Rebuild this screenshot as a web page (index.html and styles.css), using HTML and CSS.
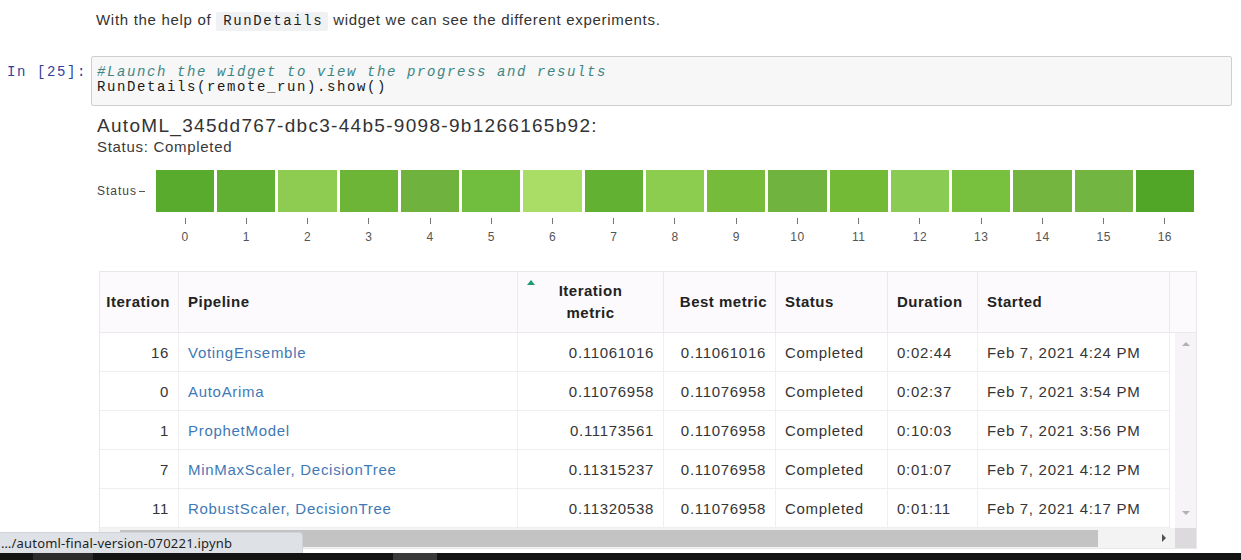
FILE: index.html
```html
<!DOCTYPE html>
<html lang="en">
<head>
<meta charset="utf-8">
<title>automl-final-version-070221</title>
<link rel="stylesheet" href="styles.css">
</head>
<body>
<div class="md">With the help of <code class="ic">RunDetails</code> widget we can see the different experiments.</div>

<div class="cell">
  <div class="prompt">In [25]:</div>
  <div class="input">
    <div class="line cm">#Launch the widget to view the progress and results</div>
    <div class="line">RunDetails(remote_run).show()</div>
  </div>
</div>

<div class="output">
  <div class="title">AutoML_345dd767-dbc3-44b5-9098-9b1266165b92:</div>
  <div class="status">Status: Completed</div>

  <div class="chart">
    <div class="ylabel">Status</div>
    <div class="bars">
      <div class="bar" style="background:#59ab2e"></div>
      <div class="bar" style="background:#62b033"></div>
      <div class="bar" style="background:#8dcb51"></div>
      <div class="bar" style="background:#6cb537"></div>
      <div class="bar" style="background:#6fb23d"></div>
      <div class="bar" style="background:#71bd3e"></div>
      <div class="bar" style="background:#a9dd66"></div>
      <div class="bar" style="background:#62b132"></div>
      <div class="bar" style="background:#8ccd50"></div>
      <div class="bar" style="background:#76bb3a"></div>
      <div class="bar" style="background:#70b43f"></div>
      <div class="bar" style="background:#73bb37"></div>
      <div class="bar" style="background:#8acb53"></div>
      <div class="bar" style="background:#77c13f"></div>
      <div class="bar" style="background:#73b53f"></div>
      <div class="bar" style="background:#72b540"></div>
      <div class="bar" style="background:#51a527"></div>
    </div>
  </div>
  <div class="axis">
    <span>0</span><span>1</span><span>2</span><span>3</span><span>4</span><span>5</span><span>6</span><span>7</span><span>8</span><span>9</span><span>10</span><span>11</span><span>12</span><span>13</span><span>14</span><span>15</span><span>16</span>
  </div>

  <div class="grid">
    <div class="hrow">
      <div class="th r">Iteration</div>
      <div class="th">Pipeline</div>
      <div class="th c sorted"><span class="sort"></span>Iteration<br>metric</div>
      <div class="th r">Best metric</div>
      <div class="th">Status</div>
      <div class="th">Duration</div>
      <div class="th">Started</div>
      <div class="th gut"></div>
    </div>
    <div class="gbody">
      <div class="rows">
        <div class="row">
          <div class="td r">16</div><div class="td"><a class="lk">VotingEnsemble</a></div><div class="td r">0.11061016</div><div class="td r">0.11061016</div><div class="td">Completed</div><div class="td">0:02:44</div><div class="td">Feb 7, 2021 4:24 PM</div>
        </div>
        <div class="row">
          <div class="td r">0</div><div class="td"><a class="lk">AutoArima</a></div><div class="td r">0.11076958</div><div class="td r">0.11076958</div><div class="td">Completed</div><div class="td">0:02:37</div><div class="td">Feb 7, 2021 3:54 PM</div>
        </div>
        <div class="row">
          <div class="td r">1</div><div class="td"><a class="lk">ProphetModel</a></div><div class="td r">0.11173561</div><div class="td r">0.11076958</div><div class="td">Completed</div><div class="td">0:10:03</div><div class="td">Feb 7, 2021 3:56 PM</div>
        </div>
        <div class="row">
          <div class="td r">7</div><div class="td"><a class="lk">MinMaxScaler, DecisionTree</a></div><div class="td r">0.11315237</div><div class="td r">0.11076958</div><div class="td">Completed</div><div class="td">0:01:07</div><div class="td">Feb 7, 2021 4:12 PM</div>
        </div>
        <div class="row">
          <div class="td r">11</div><div class="td"><a class="lk">RobustScaler, DecisionTree</a></div><div class="td r">0.11320538</div><div class="td r">0.11076958</div><div class="td">Completed</div><div class="td">0:01:11</div><div class="td">Feb 7, 2021 4:17 PM</div>
        </div>
      </div>
      <div class="vscroll"><span class="arr up"></span><span class="arr down"></span></div>
    </div>
    <div class="hscroll">
      <div class="track"><div class="thumb"></div><span class="arr right"></span></div>
      <div class="corner"></div>
    </div>
  </div>
</div>

<div class="tooltip">…/automl-final-version-070221.ipynb</div>
<div class="taskbar"><span class="tb1"></span><span class="tb2"></span></div>
</body>
</html>
```

FILE: styles.css
```css
* { box-sizing: border-box; }

html, body {
  margin: 0;
  padding: 0;
  background: #ffffff;
  height: 560px;
  overflow: hidden;
}

body {
  font-family: "Liberation Sans", Arial, sans-serif;
  color: #333333;
}

/* markdown cell */
.md {
  padding: 10px 0 0 96px;
  font-size: 15px;
  line-height: 20px;
  letter-spacing: 0.7px;
  color: #333;
}

.ic {
  font-family: "Liberation Mono", "Courier New", monospace;
  font-size: 14px;
  letter-spacing: 1.6px;
  background: #f0f1f3;
  padding: 1px 5px 2px 7px;
  border-radius: 2px;
  color: #222;
}

/* code cell */
.cell {
  display: flex;
  margin-top: 25px;
  padding: 0 9px 0 7px;
}

.prompt {
  width: 84px;
  flex: none;
  font-family: "Liberation Mono", "Courier New", monospace;
  font-size: 14px;
  letter-spacing: 1.6px;
  color: #303f9f;
  padding-top: 9px;
  line-height: 15px;
}

.input {
  flex: 1;
  height: 50px;
  background: #f7f7f7;
  border: 1px solid #cfcfcf;
  border-radius: 2px;
  padding: 8px 5px 0 5px;
  font-family: "Liberation Mono", "Courier New", monospace;
  font-size: 14px;
  letter-spacing: 1.6px;
  line-height: 15px;
  color: #1a1a1a;
}

.line { white-space: pre; }
.cm { color: #3d8585; font-style: italic; }

/* output */
.output {
  margin-left: 97px;
}

.title {
  margin-top: 8px;
  font-size: 19px;
  line-height: 24px;
  letter-spacing: 1.3px;
  color: #333;
}

.status {
  font-size: 15px;
  line-height: 18px;
  letter-spacing: 0.7px;
  color: #3a3a3a;
}

.chart {
  display: flex;
  align-items: center;
  margin-top: 14px;
  height: 42px;
}

.ylabel {
  width: 59px;
  flex: none;
  font-size: 12px;
  letter-spacing: 1px;
  color: #444;
  display: flex;
  align-items: center;
}

.ylabel::after {
  content: "";
  width: 6px;
  height: 1px;
  background: #555;
  margin-left: 2px;
}

.bars {
  display: grid;
  grid-template-columns: repeat(17, 1fr);
  column-gap: 3px;
  width: 1038px;
  height: 42px;
}

.bar { height: 100%; }

.axis {
  display: grid;
  grid-template-columns: repeat(17, 1fr);
  column-gap: 3px;
  width: 1038px;
  margin-left: 59px;
  margin-top: 6px;
}

.axis span {
  display: flex;
  flex-direction: column;
  align-items: center;
  font-size: 12px;
  letter-spacing: 0.5px;
  line-height: 14px;
  color: #555;
}

.axis span::before {
  content: "";
  width: 1px;
  height: 6px;
  background: #777;
  margin-bottom: 6px;
}

/* table */
.grid {
  margin: 27px 0 0 2px;
  width: 1098px;
  border: 1px solid #e9e7e9;
  font-size: 15px;
  letter-spacing: 0.7px;
}

.hrow {
  display: grid;
  grid-template-columns: 79px 339px 146px 112px 112px 90px 192px 26px;
  height: 61px;
  background: #fcfafc;
  border-bottom: 1px solid #ebe9eb;
}

.th {
  display: flex;
  align-items: center;
  padding: 0 9px;
  border-right: 1px solid #ece9ec;
  font-weight: bold;
  color: #222;
  letter-spacing: 0.5px;
  line-height: 22px;
}

.th.r { justify-content: flex-end; padding-right: 8px; }
.th.c { justify-content: center; text-align: center; }
.th.gut { border-right: none; }

.sorted { position: relative; }

.sort {
  position: absolute;
  left: 9px;
  top: 8px;
  width: 0;
  height: 0;
  border-left: 4px solid transparent;
  border-right: 4px solid transparent;
  border-bottom: 5px solid #1f9b70;
}

.gbody {
  display: flex;
}

.rows {
  width: 1070px;
  flex: none;
}

.row {
  display: grid;
  grid-template-columns: 79px 339px 146px 112px 112px 90px 192px;
  height: 39px;
  border-bottom: 1px solid #efedef;
}

.td {
  display: flex;
  align-items: center;
  padding: 0 9px;
  border-right: 1px solid #f1eff1;
  color: #353535;
  white-space: nowrap;
}

.td.r { justify-content: flex-end; }

.lk { color: #3f79b5; }

.vscroll {
  margin-left: 5px;
  width: 21px;
  background: #f6f4f6;
  display: flex;
  flex-direction: column;
  justify-content: space-between;
  align-items: center;
  padding: 9px 0 13px;
}

.arr {
  width: 0;
  height: 0;
}

.arr.up {
  border-left: 4px solid transparent;
  border-right: 4px solid transparent;
  border-bottom: 4px solid #b2b0b2;
}

.arr.down {
  border-left: 4px solid transparent;
  border-right: 4px solid transparent;
  border-top: 4px solid #b2b0b2;
}

.hscroll {
  display: flex;
  height: 20px;
}

.track {
  flex: 1;
  background: #f3f3f3;
  display: flex;
  align-items: center;
  padding: 0 9px 0 20px;
}

.thumb {
  width: 978px;
  height: 17px;
  background: #c3c3c3;
}

.arr.right {
  margin-left: auto;
  border-top: 4px solid transparent;
  border-bottom: 4px solid transparent;
  border-left: 4px solid #505050;
}

.corner {
  width: 21px;
  background: #dcdadc;
}

/* overlays */
.tooltip {
  position: fixed;
  left: 0;
  bottom: 7px;
  width: 303px;
  height: 21px;
  padding-left: 1px;
  background: #dee1e6;
  border-top: 1px solid #cfd2d6;
  border-right: 1px solid #cfd2d6;
  border-radius: 0 4px 0 0;
  font-family: "Noto Sans", "Open Sans", sans-serif;
  font-size: 13px;
  line-height: 20px;
  letter-spacing: 0.2px;
  color: #1f1f1f;
  white-space: nowrap;
}

.taskbar {
  position: fixed;
  left: 0;
  right: 0;
  bottom: 0;
  height: 7px;
  background: #141414;
  display: flex;
}

.tb1 {
  margin-left: 33px;
  width: 60px;
  background: #2c2c2c;
}

.tb2 {
  margin-left: 300px;
  width: 44px;
  background: #3a3a3a;
}
```
